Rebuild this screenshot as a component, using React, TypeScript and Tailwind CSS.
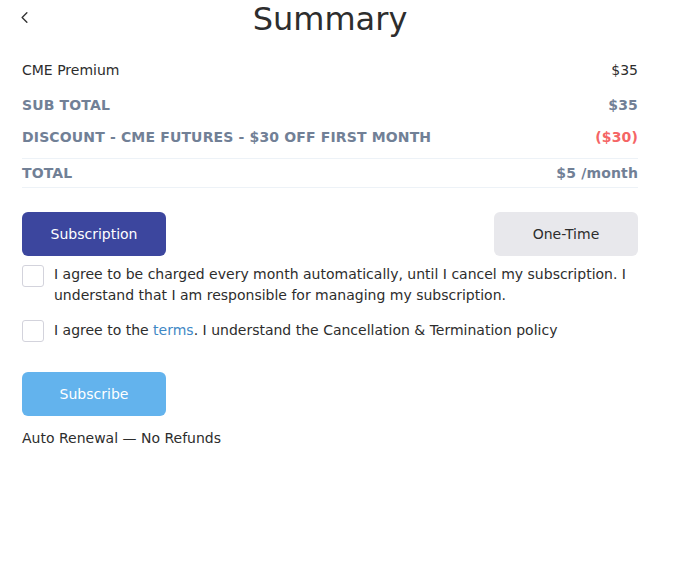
import { ChevronLeft } from 'lucide-react';

const font = { fontFamily: '"DejaVu Sans", Verdana, sans-serif' };

function Row({ label, value, bold, red }: { label: string; value: string; bold?: boolean; red?: boolean }) {
  return (
    <div className={`flex justify-between items-center ${bold ? 'font-bold text-[#718096] tracking-[0.15px]' : 'text-[#2d2d2d]'}`}>
      <span>{label}</span>
      <span className={red ? 'text-[#f56565]' : ''}>{value}</span>
    </div>
  );
}

export default function App() {
  return (
    <div className="w-[660px] bg-white px-[22px] text-[14px] text-[#2d2d2d]" style={font}>
      {/* Header */}
      <div className="relative h-[38px] flex items-center justify-center">
        <button className="absolute left-[-7px] top-[8px] text-[#333]">
          <ChevronLeft className="w-[19px] h-[19px]" strokeWidth={1.75} />
        </button>
        <h1 className="text-[32px] leading-[38px] text-[#2d2d2d]">Summary</h1>
      </div>

      {/* Line items */}
      <div className="mt-[21px] flex flex-col">
        <div className="h-[22px] flex flex-col justify-center">
          <Row label="CME Premium" value="$35" />
        </div>
        <div className="mt-[13px] h-[22px] flex flex-col justify-center">
          <Row label="SUB TOTAL" value="$35" bold />
        </div>
        <div className="mt-[10px] h-[22px] flex flex-col justify-center">
          <Row label="DISCOUNT - CME FUTURES - $30 OFF FIRST MONTH" value="($30)" bold red />
        </div>
        <div className="mt-[10px] border-t border-b border-[#edf2f7] h-[30px] flex flex-col justify-center">
          <Row label="TOTAL" value="$5 /month" bold />
        </div>
      </div>

      {/* Plan type */}
      <div className="mt-[24px] flex justify-between">
        <button className="w-[144px] h-[44px] rounded-[6px] bg-[#3c469e] text-white">Subscription</button>
        <button className="w-[144px] h-[44px] rounded-[6px] bg-[#e8e8ec] text-[#2d2d2d]">One-Time</button>
      </div>

      {/* Agreements */}
      <div className="mt-[8px] flex gap-[10px] items-start">
        <span className="mt-[1px] w-[22px] h-[22px] shrink-0 rounded-[3px] border border-[#d3d3dc] bg-white" />
        <p className="leading-[21px]">
          I agree to be charged every month automatically, until I cancel my subscription. I understand that I am responsible for managing my subscription.
        </p>
      </div>
      <div className="mt-[14px] flex gap-[10px] items-start">
        <span className="w-[22px] h-[22px] shrink-0 rounded-[3px] border border-[#d3d3dc] bg-white" />
        <p className="leading-[21px]">
          I agree to the <a className="text-[#3f88c5]">terms</a>. I understand the Cancellation &amp; Termination policy
        </p>
      </div>

      <button className="mt-[30px] w-[144px] h-[44px] rounded-[6px] bg-[#63b3ed] text-white">Subscribe</button>
      <p className="mt-[12px] leading-[20px]">Auto Renewal — No Refunds</p>
    </div>
  );
}
